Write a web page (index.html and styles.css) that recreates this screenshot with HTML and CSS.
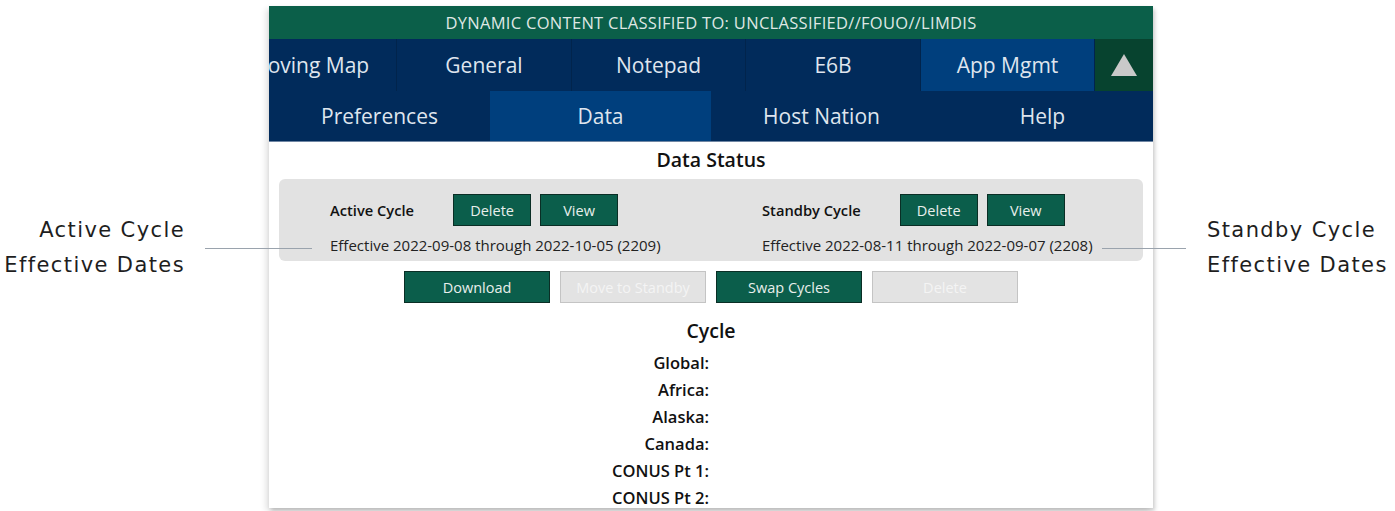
FILE: index.html
```html
<!DOCTYPE html>
<html>
<head>
<meta charset="utf-8">
<link rel="stylesheet" href="styles.css">
</head>
<body>
<div class="canvas">
  <div class="note note-left">
    <div class="note-text">Active Cycle<br>Effective Dates</div>
    <div class="leader leader-left"></div>
  </div>
  <div class="panel">
    <div class="classbar">DYNAMIC CONTENT CLASSIFIED TO: UNCLASSIFIED//FOUO//LIMDIS</div>
    <div class="nav nav-top">
      <div class="tab w175">Moving Map</div>
      <div class="tab w175">General</div>
      <div class="tab w174">Notepad</div>
      <div class="tab w175">E6B</div>
      <div class="tab w174 active">App Mgmt</div>
      <div class="tab tri-cell"><svg width="26" height="22" viewBox="0 0 26 22"><polygon points="13,0 26,22 0,22" fill="#c9c9c9"/></svg></div>
    </div>
    <div class="nav nav-sub">
      <div class="tab">Preferences</div>
      <div class="tab active">Data</div>
      <div class="tab">Host Nation</div>
      <div class="tab">Help</div>
    </div>
    <div class="content">
      <div class="title">Data Status</div>
      <div class="statusbox">
        <div class="cyc cyc-active">
          <div class="cyc-head">
            <span class="cyc-label">Active Cycle</span>
            <button class="btn small">Delete</button>
            <button class="btn small">View</button>
          </div>
          <div class="eff">Effective 2022-09-08 through 2022-10-05 (2209)</div>
        </div>
        <div class="cyc cyc-standby">
          <div class="cyc-head">
            <span class="cyc-label">Standby Cycle</span>
            <button class="btn small">Delete</button>
            <button class="btn small">View</button>
          </div>
          <div class="eff">Effective 2022-08-11 through 2022-09-07 (2208)</div>
        </div>
      </div>
      <div class="actions">
        <button class="btn wide">Download</button>
        <button class="btn wide disabled">Move to Standby</button>
        <button class="btn wide">Swap Cycles</button>
        <button class="btn wide disabled">Delete</button>
      </div>
      <div class="cycle-title">Cycle</div>
      <div class="regions">
        <div class="region">Global:</div>
        <div class="region">Africa:</div>
        <div class="region">Alaska:</div>
        <div class="region">Canada:</div>
        <div class="region">CONUS Pt 1:</div>
        <div class="region">CONUS Pt 2:</div>
      </div>
    </div>
  </div>
  <div class="note note-right">
    <div class="leader leader-right"></div>
    <div class="note-text">Standby Cycle<br>Effective Dates</div>
  </div>
</div>
</body>
</html>
```

FILE: styles.css
```css
* { box-sizing: border-box; }
html, body { margin: 0; padding: 0; background: #fff; }
body { width: 1395px; height: 511px; overflow: hidden; font-family: "Open Sans", "Noto Sans", sans-serif; }

.canvas { display: flex; height: 511px; padding-top: 6px; }

.note { position: relative; width: 269px; flex-shrink: 0; }
.note-text { font-family: "DejaVu Sans", "Lato", sans-serif; font-size: 21px; line-height: 35px; color: #1e1e1e; font-weight: 400; letter-spacing: 1.4px; }
.note-left .note-text { position: absolute; right: 84px; top: 207px; text-align: right; }
.note-right { width: 242px; }
.note-right .note-text { position: absolute; left: 54px; top: 207px; }
.leader { position: absolute; height: 1px; background: #9aa3ad; top: 242px; }
.leader-left { left: 205px; width: 107px; }
.leader-right { left: -51px; width: 84px; }

.panel { width: 884px; height: 502px; flex-shrink: 0; background: #fff; box-shadow: -3px 3px 6px rgba(0,0,0,0.12), 2px 3px 4px rgba(0,0,0,0.18); display: flex; flex-direction: column; overflow: hidden; }
.panel > * { flex-shrink: 0; }

.classbar { height: 33px; background: #0b5f49; color: #dfe7e4; font-size: 16.5px; display: flex; align-items: center; justify-content: center; letter-spacing: 0.3px; }

.nav { display: flex; color: #dfe5ee; }
.nav-top { height: 52px; background: #012b5b; justify-content: flex-end; overflow: hidden; }
.nav-sub { height: 51px; background: #012b5b; border-bottom: 1px solid #6f86a3; }
.tab { flex-shrink: 0; display: flex; align-items: center; justify-content: center; font-size: 21px; }
.nav-top .tab { border-left: 1px solid #01244c; }
.nav-sub .tab { flex: 1; }
.w175 { width: 175px; }
.w174 { width: 174px; }
.tab.active { background: #003f7d; }
.tri-cell { width: 59px; background: #07432f; }

.content { display: flex; flex-direction: column; align-items: center; padding: 0 10px; }
.title { font-weight: 600; font-size: 19.5px; color: #111; margin-top: 5px; line-height: 26px; }
.statusbox { align-self: stretch; margin-top: 6px; height: 82px; background: #e2e2e2; border-radius: 6px; display: flex; padding: 15px 0 0 51px; }
.cyc-active { width: 432px; flex-shrink: 0; }
.cyc-standby { flex: 1; }
.cyc-head { display: flex; align-items: center; gap: 9px; height: 32px; }
.cyc-label { font-weight: 600; font-size: 14.7px; color: #111; margin-right: 30px; }
.eff { font-size: 15px; color: #222; margin-top: 8px; line-height: 22px; }

.btn { font-family: inherit; background: #0b5e4b; color: #e8efec; border: 1px solid #0a2e25; font-size: 14.5px; height: 32px; padding: 0; }
.btn.small { width: 78px; }
.btn.wide { width: 146px; }
.btn.disabled { background: #e3e3e3; border-color: #c4c4c4; color: #f4f4f4; }

.actions { display: flex; gap: 10px; margin-top: 10px; }

.cycle-title { font-weight: 600; font-size: 19.5px; color: #111; margin-top: 14px; line-height: 28px; }
.regions { display: flex; flex-direction: column; align-items: flex-end; width: 100%; padding-right: 434px; margin-top: 4px; }
.region { font-weight: 600; font-size: 16.5px; color: #111; line-height: 27px; }
```
